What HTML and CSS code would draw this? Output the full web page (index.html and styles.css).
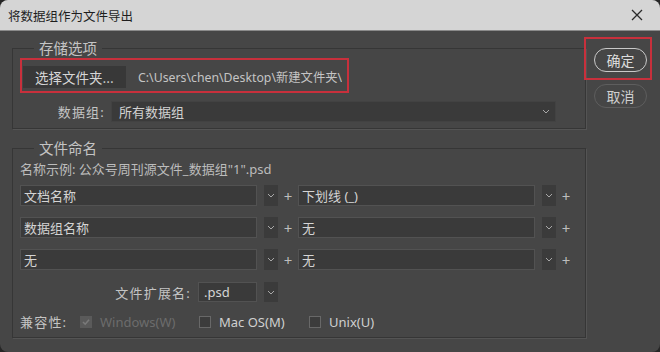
FILE: index.html
```html
<!DOCTYPE html>
<html lang="zh-CN">
<head>
    <meta charset="UTF-8">
    <meta name="viewport" content="width=device-width, initial-scale=1.0">
    <title>将数据组作为文件导出</title>
    <link rel="stylesheet" href="styles.css">
</head>
<body>
    <div class="window">
        <div class="titlebar">
            <span class="title">将数据组作为文件导出</span>
            <svg class="close" width="12" height="12" viewBox="0 0 12 12">
                <path d="M1 1 L11 11 M11 1 L1 11" stroke="#2a2a2a" stroke-width="1.3" fill="none"/>
            </svg>
        </div>

        <div class="content">
            <div class="main">
                <!-- storage options -->
                <fieldset class="group storage">
                    <legend>存储选项</legend>
                    <div class="mark path-row">
                        <button class="btn-folder">选择文件夹...</button>
                        <span class="path">C:\Users\chen\Desktop\新建文件夹\</span>
                    </div>
                    <div class="field-row">
                        <span class="label dataset-label">数据组:</span>
                        <div class="select dataset">
                            <span>所有数据组</span>
                            <svg class="chev" width="8" height="5" viewBox="0 0 8 5"><path d="M1 1 L4 4 L7 1" stroke="#a8a8a8" stroke-width="1" fill="none"/></svg>
                        </div>
                    </div>
                </fieldset>

                <!-- file naming -->
                <fieldset class="group naming">
                    <legend>文件命名</legend>
                    <p class="example">名称示例: 公众号周刊源文件_数据组"1".psd</p>

                    <div class="name-row">
                        <div class="input part">文档名称</div>
                        <div class="drop"><svg width="8" height="5" viewBox="0 0 8 5"><path d="M1 1 L4 4 L7 1" stroke="#a8a8a8" stroke-width="1" fill="none"/></svg></div>
                        <span class="plus">+</span>
                        <div class="input part">下划线 (_)</div>
                        <div class="drop"><svg width="8" height="5" viewBox="0 0 8 5"><path d="M1 1 L4 4 L7 1" stroke="#a8a8a8" stroke-width="1" fill="none"/></svg></div>
                        <span class="plus">+</span>
                    </div>
                    <div class="name-row">
                        <div class="input part">数据组名称</div>
                        <div class="drop"><svg width="8" height="5" viewBox="0 0 8 5"><path d="M1 1 L4 4 L7 1" stroke="#a8a8a8" stroke-width="1" fill="none"/></svg></div>
                        <span class="plus">+</span>
                        <div class="input part">无</div>
                        <div class="drop"><svg width="8" height="5" viewBox="0 0 8 5"><path d="M1 1 L4 4 L7 1" stroke="#a8a8a8" stroke-width="1" fill="none"/></svg></div>
                        <span class="plus">+</span>
                    </div>
                    <div class="name-row">
                        <div class="input part">无</div>
                        <div class="drop"><svg width="8" height="5" viewBox="0 0 8 5"><path d="M1 1 L4 4 L7 1" stroke="#a8a8a8" stroke-width="1" fill="none"/></svg></div>
                        <span class="plus">+</span>
                        <div class="input part">无</div>
                        <div class="drop"><svg width="8" height="5" viewBox="0 0 8 5"><path d="M1 1 L4 4 L7 1" stroke="#a8a8a8" stroke-width="1" fill="none"/></svg></div>
                        <span class="plus">+</span>
                    </div>

                    <div class="ext-row">
                        <span class="label ext-label">文件扩展名:</span>
                        <div class="input ext">.psd</div>
                        <div class="drop"><svg width="8" height="5" viewBox="0 0 8 5"><path d="M1 1 L4 4 L7 1" stroke="#a8a8a8" stroke-width="1" fill="none"/></svg></div>
                    </div>

                    <div class="compat-row">
                        <span class="label compat-label">兼容性:</span>
                        <span class="check disabled">
                            <span class="box"><svg width="10" height="10" viewBox="0 0 10 10"><path d="M2 5 L4.2 7.2 L8 2.8" stroke="#7a7a7a" stroke-width="1.6" fill="none"/></svg></span>
                            Windows(W)
                        </span>
                        <span class="check mac"><span class="box"></span>Mac OS(M)</span>
                        <span class="check"><span class="box"></span>Unix(U)</span>
                    </div>
                </fieldset>
            </div>

            <div class="side">
                <div class="mark ok-mark">
                    <button class="pill ok">确定</button>
                </div>
                <button class="pill cancel">取消</button>
            </div>
        </div>
    </div>
</body>
</html>
```

FILE: styles.css
```css
/* Dialog: export data sets as files */
body {
    margin: 0;
    padding: 0;
    background-color: #262626;
    font-family: "Noto Sans", "Noto Sans CJK SC", sans-serif;
    font-size: 13px;
    color: #cfcfcf;
}
.window {
    width: 660px;
    height: 352px;
    background-color: #464646;
    border-radius: 8px;
    overflow: hidden;
}
.titlebar {
    height: 30px;
    background-color: #d5d5d5;
    border-bottom: 1px solid #8a8a8a;
    display: flex;
    align-items: center;
    justify-content: space-between;
    padding: 0 17px 0 8px;
}
.title {
    font-size: 12.5px;
    color: #1e1e1e;
    font-family: "Noto Sans CJK SC", sans-serif;
}
.content {
    display: flex;
    padding-left: 12px;
}
.main {
    width: 574px;
    margin-top: 7px;
}
.group {
    box-sizing: border-box;
    width: 574px;
    margin: 0;
    padding: 0 7px;
    border: 1px solid #363636;
    box-shadow: 1px 1px 0 #545454;
}
.group legend {
    margin-left: 14px;
    padding: 0 5px;
    font-size: 14.5px;
    line-height: 20px;
    color: #c4c4c4;
}
.storage {
    padding-bottom: 6px;
}
.naming {
    margin-top: 9px;
    padding-bottom: 6px;
}

/* red annotation boxes */
.mark {
    box-sizing: border-box;
    border: 2px solid #c8303c;
}
.path-row {
    display: flex;
    align-items: center;
    width: 329px;
    padding: 6px 0 3px 1px;
}
.btn-folder {
    flex: none;
    width: 103px;
    height: 22px;
    padding: 0;
    border: none;
    background-color: #383838;
    color: #d6d6d6;
    font-family: "Noto Sans CJK SC", sans-serif;
    font-size: 13.5px;
    text-align: center;
}
.path {
    margin-left: 12px;
    font-size: 12.3px;
    color: #c4c4c4;
    white-space: nowrap;
    overflow: hidden;
}
.field-row {
    display: flex;
    align-items: center;
    margin-top: 8px;
}
.label {
    color: #c4c4c4;
    white-space: nowrap;
    letter-spacing: 1.2px;
}
.dataset-label {
    width: 85px;
    text-align: right;
    margin-right: 6px;
}
.select {
    box-sizing: border-box;
    height: 21px;
    display: flex;
    align-items: center;
    justify-content: space-between;
    background-color: #3a3a3a;
    border: 1px solid #424242;
    padding: 0 5px 0 7px;
    color: #d2d2d2;
}
.dataset {
    width: 445px;
}

.example {
    margin: 2px 0 0;
    line-height: 18px;
    color: #bcbcbc;
}
.name-row {
    display: flex;
    align-items: center;
    margin-top: 11px;
}
.name-row:first-of-type {
    margin-top: 7px;
}
.input {
    box-sizing: border-box;
    height: 21px;
    display: flex;
    align-items: center;
    padding: 0 3px;
    background-color: #3a3a3a;
    border: 1px solid #525252;
    color: #d4d4d4;
}
.part {
    width: 237px;
}
.drop {
    width: 14px;
    height: 21px;
    margin-left: 7px;
    background-color: #3b3b3b;
    display: flex;
    align-items: center;
    justify-content: center;
}
.plus {
    width: 20px;
    text-align: center;
    font-size: 15px;
    color: #bdbdbd;
}
.ext-row {
    display: flex;
    align-items: center;
    margin-top: 12px;
}
.ext-label {
    width: 171px;
    text-align: right;
    margin-right: 7px;
}
.ext {
    width: 59px;
    height: 20px;
    padding-left: 5px;
}
.ext-row .drop {
    height: 20px;
}

.compat-row {
    display: flex;
    align-items: center;
    margin-top: 11px;
    line-height: 18px;
}
.compat-label {
    width: 60px;
}
.check {
    display: flex;
    align-items: center;
    color: #d0d0d0;
    font-size: 13px;
}
.check .box {
    box-sizing: border-box;
    width: 12px;
    height: 12px;
    margin-right: 8px;
    border: 1px solid #686868;
    background-color: #3c3c3c;
    display: flex;
    align-items: center;
    justify-content: center;
}
.check.disabled {
    color: #6c6c6c;
    width: 119px;
}
.check.disabled .box {
    background-color: #5a5a5a;
    border-color: #5a5a5a;
}
.check.mac {
    width: 110px;
}

/* right column buttons */
.side {
    margin-left: -2px;
    padding-top: 6px;
    display: flex;
    flex-direction: column;
    align-items: flex-start;
}
.ok-mark {
    padding: 9px 3px 6px 8px;
}
.pill {
    width: 53px;
    height: 24px;
    padding: 0;
    border-radius: 12px;
    background-color: #464646;
    font-family: "Noto Sans CJK SC", sans-serif;
    font-size: 14px;
    color: #dcdcdc;
}
.ok {
    border: 1px solid #c9c9c9;
}
.cancel {
    margin: 4px 0 0 10px;
    border: 1px solid #5e5e5e;
    color: #cfcfcf;
}
```
